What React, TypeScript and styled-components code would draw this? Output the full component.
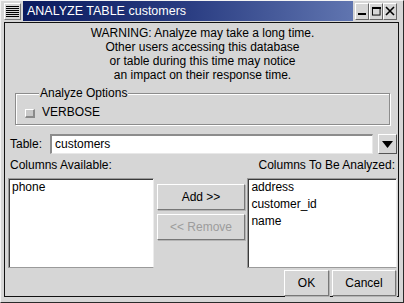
import React from 'react'
import styled, { createGlobalStyle } from 'styled-components'

const GlobalStyle = createGlobalStyle`
  html, body {
    margin: 0;
    padding: 0;
    background: #d6d6d6;
  }
  body {
    font-family: "Liberation Sans", Arial, sans-serif;
    font-size: 12px;
    color: #000;
  }
  * {
    box-sizing: border-box;
  }
`

const Window = styled.div`
  width: 404px;
  height: 303px;
  background: #d6d6d6;
  border-top: 1px solid #f4f4f4;
  border-left: 1px solid #f4f4f4;
  border-right: 1px solid #2a2a2a;
  border-bottom: 1px solid #2a2a2a;
  display: flex;
  flex-direction: column;
  padding: 0 4px 0 3px;
`

const TitleBar = styled.div`
  height: 20px;
  display: flex;
  align-items: center;
`

const MenuButton = styled.div`
  width: 17px;
  height: 17px;
  border-top: 1px solid #fff;
  border-left: 1px solid #fff;
  border-right: 1px solid #777;
  border-bottom: 1px solid #777;
  padding: 2px 1px;
  background: repeating-linear-gradient(
    to bottom,
    #000 0px,
    #000 1px,
    transparent 1px,
    transparent 2px
  );
  background-clip: content-box;
`

const TitleArea = styled.div`
  flex: 1;
  height: 20px;
  margin: 0 2px 0 2px;
  background: linear-gradient(to right, #0a1a5e 0%, #2a3d82 50%, #6075b0 100%);
  color: #fff;
  font-size: 12.5px;
  line-height: 20px;
  padding-left: 4px;
  white-space: nowrap;
`

const WinButtons = styled.div`
  display: flex;
  margin-right: 2px;
`

const WinButton = styled.div`
  width: 14px;
  height: 17px;
  border-top: 1px solid #fff;
  border-left: 1px solid #fff;
  border-right: 1px solid #666;
  border-bottom: 1px solid #666;
  display: flex;
  align-items: center;
  justify-content: center;
`

const Panel = styled.div`
  margin-top: 1px;
  height: 275px;
  border: 1px solid #111;
  display: flex;
  flex-direction: column;
  padding: 0 1px 0 3px;
`

const Warning = styled.div`
  padding-top: 3px;
  text-align: center;
  line-height: 14px;
`

const GroupBox = styled.fieldset`
  margin: 4px 7px 0 7px;
  padding: 3px 0 0 9px;
  height: 39px;
  border: 1px solid #8c8c8c;
  box-shadow: inset 1px 1px 0 #fff, 1px 1px 0 #fff;
`

const Legend = styled.legend`
  margin-left: 14px;
  padding: 0 1px;
  line-height: 14px;
  background: #d6d6d6;
  position: relative;
`

const CheckRow = styled.label`
  display: flex;
  align-items: center;
  height: 18px;
  gap: 7px;
`

const CheckBox = styled.span`
  width: 10px;
  height: 9px;
  margin-top: 2px;
  background: #c8c8c8;
  border-top: 1px solid #fff;
  border-left: 1px solid #fff;
  border-right: 2px solid #8a8a8a;
  border-bottom: 2px solid #8a8a8a;
`

const TableRow = styled.div`
  margin-top: 9px;
  height: 20px;
  display: flex;
  align-items: center;
  padding-left: 2px;
`

const Label = styled.span`
  width: 40px;
`

const TextInput = styled.div`
  flex: 1;
  height: 20px;
  background: #fff;
  border-top: 2px solid #8c8c8c;
  border-left: 2px solid #8c8c8c;
  border-right: 1px solid #e8e8e8;
  border-bottom: 1px solid #e8e8e8;
  padding-left: 3px;
  line-height: 17px;
`

const DropButton = styled.div`
  width: 19px;
  height: 20px;
  margin-left: 5px;
  border-top: 1px solid #fff;
  border-left: 1px solid #fff;
  border-right: 1px solid #555;
  border-bottom: 1px solid #555;
  display: flex;
  align-items: center;
  justify-content: center;
`

const ColumnLabels = styled.div`
  margin-top: 4px;
  height: 14px;
  line-height: 14px;
  display: flex;
  justify-content: space-between;
  padding: 0 2px 0 2px;
`

const ListsRow = styled.div`
  margin-top: 6px;
  height: 90px;
  display: flex;
`

const ListBox = styled.div<{ $width: number }>`
  width: ${p => p.$width}px;
  height: 90px;
  background: #fff;
  border-top: 1px solid #9a9a9a;
  border-left: 1px solid #9a9a9a;
  border-right: 1px solid #ececec;
  border-bottom: 1px solid #9a9a9a;
  box-shadow: inset 1px 1px 0 #3a3a3a;
  padding: 0 0 0 3px;
`

const ListItem = styled.div`
  line-height: 17px;
`

const MiddleCol = styled.div`
  width: 94px;
  padding: 6px 2px 0 3px;
  display: flex;
  flex-direction: column;
  gap: 4px;
`

const Button = styled.div<{ $disabled?: boolean; $width?: number }>`
  ${p => (p.$width ? `width: ${p.$width}px;` : '')}
  height: 26px;
  display: flex;
  align-items: center;
  justify-content: center;
  color: ${p => (p.$disabled ? '#9c9c9c' : '#000')};
  border-top: 1px solid #fff;
  border-left: 1px solid #fff;
  border-right: 1px solid #777;
  border-bottom: 1px solid #777;
  box-shadow: 1px 1px 0 #b4b4b4;
`

const Footer = styled.div`
  margin-top: 2px;
  display: flex;
  justify-content: flex-end;
  gap: 3px;
  padding-right: 1px;
`

const App = () => {
  return (
    <>
      <GlobalStyle />
      <Window>
        <TitleBar>
          <MenuButton />
          <TitleArea>ANALYZE TABLE customers</TitleArea>
          <WinButtons>
            <WinButton>
              <svg width="10" height="10" viewBox="0 0 10 10">
                <rect x="1" y="7" width="8" height="2" fill="#000" />
              </svg>
            </WinButton>
            <WinButton>
              <svg width="10" height="10" viewBox="0 0 10 10">
                <rect x="1" y="1" width="8" height="8" fill="none" stroke="#000" strokeWidth="1" transform="translate(0.5 0.5) scale(0.95)" />
                <rect x="1" y="1" width="9" height="2" fill="#000" />
              </svg>
            </WinButton>
            <WinButton>
              <svg width="10" height="10" viewBox="0 0 10 10">
                <path d="M1 1 L9 9 M9 1 L1 9" stroke="#000" strokeWidth="1.6" />
              </svg>
            </WinButton>
          </WinButtons>
        </TitleBar>
        <Panel>
          <Warning>
            WARNING: Analyze may take a long time.
            <br />
            Other users accessing this database
            <br />
            or table during this time may notice
            <br />
            an impact on their response time.
          </Warning>
          <GroupBox>
            <Legend>Analyze Options</Legend>
            <CheckRow>
              <CheckBox />
              VERBOSE
            </CheckRow>
          </GroupBox>
          <TableRow>
            <Label>Table:</Label>
            <TextInput>customers</TextInput>
            <DropButton>
              <svg width="11" height="7" viewBox="0 0 11 7">
                <polygon points="0,0 11,0 5.5,7" fill="#000" />
              </svg>
            </DropButton>
          </TableRow>
          <ColumnLabels>
            <span>Columns Available:</span>
            <span>Columns To Be Analyzed:</span>
          </ColumnLabels>
          <ListsRow>
            <ListBox $width={146}>
              <ListItem>phone</ListItem>
            </ListBox>
            <MiddleCol>
              <Button>Add &gt;&gt;</Button>
              <Button $disabled>&lt;&lt; Remove</Button>
            </MiddleCol>
            <ListBox $width={150}>
              <ListItem>address</ListItem>
              <ListItem>customer_id</ListItem>
              <ListItem>name</ListItem>
            </ListBox>
          </ListsRow>
          <Footer>
            <Button $width={45}>OK</Button>
            <Button $width={64}>Cancel</Button>
          </Footer>
        </Panel>
      </Window>
    </>
  )
}

export default App
